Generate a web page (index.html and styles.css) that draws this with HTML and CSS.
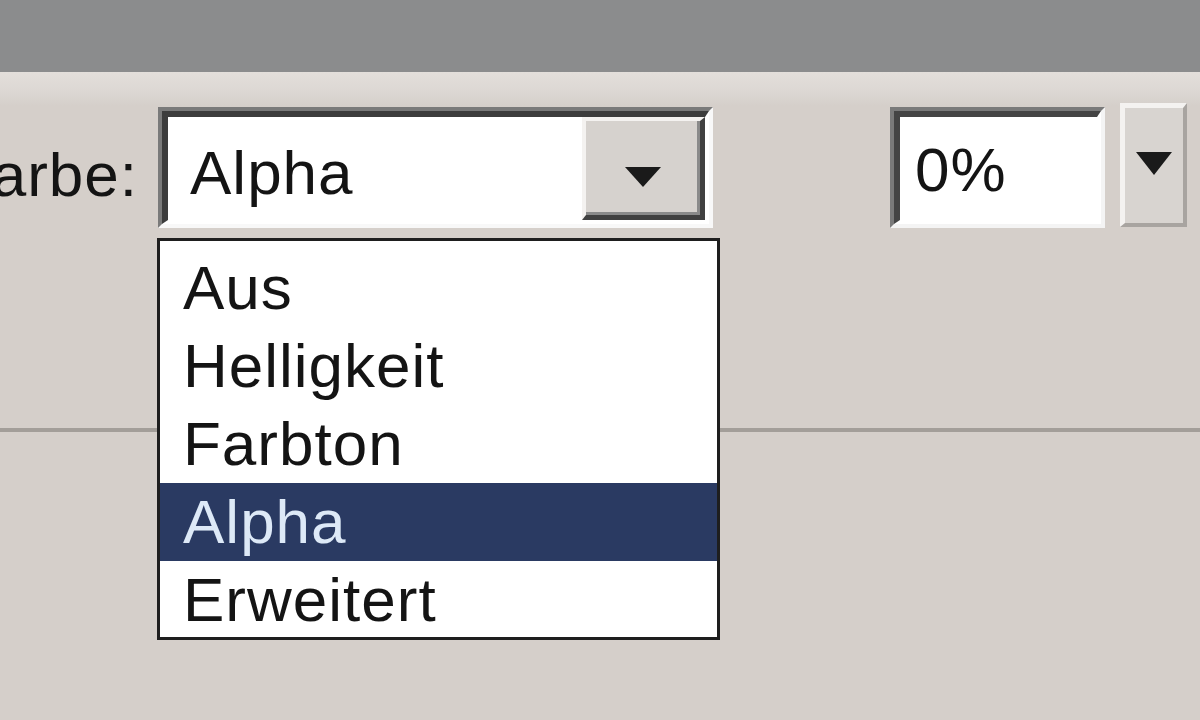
FILE: index.html
```html
<!DOCTYPE html>
<html lang="de">
<head>
<meta charset="utf-8">
<title>Farbe</title>
<link rel="stylesheet" href="styles.css">
</head>
<body>
<div class="screen">
  <div class="titlebar"></div>
  <div class="panel">
    <div class="row">
      <div class="label"><span>Farbe:</span></div>
      <div class="combo">
        <div class="combo-inner">
          <div class="combo-text">Alpha</div>
          <div class="combo-btn"><span class="arrow"></span></div>
        </div>
      </div>
      <div class="field">
        <div class="field-inner">0%</div>
      </div>
      <div class="drop-btn"><span class="arrow arrow-small"></span></div>
    </div>
  </div>
  <div class="divider"></div>
  <div class="lower"></div>
  <ul class="listbox">
    <li class="item">Aus</li>
    <li class="item">Helligkeit</li>
    <li class="item">Farbton</li>
    <li class="item selected">Alpha</li>
    <li class="item">Erweitert</li>
  </ul>
</div>
</body>
</html>
```

FILE: styles.css
```css
* { box-sizing: border-box; }

html, body {
  margin: 0;
  padding: 0;
}

body {
  width: 1200px;
  height: 720px;
  overflow: hidden;
  background: #d5cfca;
  font-family: "Liberation Sans", Arial, sans-serif;
  font-size: 62px;
  letter-spacing: 1px;
  color: #141414;
}

.screen {
  position: relative;
  width: 1200px;
  height: 720px;
  display: flex;
  flex-direction: column;
  overflow: hidden;
}

.titlebar {
  height: 72px;
  background: #8b8c8d;
  flex: none;
}

.panel {
  height: 356px;
  flex: none;
  background: linear-gradient(#e3dfdb 0, #dcd7d3 20px, #d5cfca 34px);
}

.row {
  display: flex;
  align-items: flex-start;
  padding-top: 35px;
}

.label {
  width: 138px;
  flex: none;
  display: flex;
  justify-content: flex-end;
  margin-top: 32px;
  line-height: 71px;
  white-space: nowrap;
}

.label span { flex: none; }

.combo {
  margin-left: 20px;
  width: 555px;
  height: 121px;
  flex: none;
  border: 4px solid;
  border-color: #7a7a7a #f8f8f8 #f8f8f8 #7a7a7a;
}

.combo-inner {
  height: 100%;
  display: flex;
  border-style: solid;
  border-width: 6px 4px 4px 6px;
  border-color: #3c3c3c #ffffff #ffffff #3c3c3c;
  background: #ffffff;
}

.combo-text {
  flex: 1;
  padding: 20px 0 0 22px;
  line-height: 71px;
  white-space: nowrap;
}

.combo-btn {
  width: 123px;
  flex: none;
  display: flex;
  justify-content: center;
  padding-top: 46px;
  background: #d6d2ce;
  border-style: solid;
  border-width: 4px 5px 5px 4px;
  border-color: #f4f2f0 #404040 #404040 #f4f2f0;
  box-shadow: inset -3px -3px 0 #8a8a8a;
}

.arrow {
  width: 0;
  height: 0;
  border-left: 18px solid transparent;
  border-right: 18px solid transparent;
  border-top: 20px solid #1a1a1a;
}

.arrow-small {
  border-left-width: 18px;
  border-right-width: 18px;
  border-top-width: 23px;
}

.field {
  margin-left: 177px;
  width: 215px;
  height: 121px;
  flex: none;
  border: 4px solid;
  border-color: #7a7a7a #f4f4f4 #f4f4f4 #7a7a7a;
}

.field-inner {
  height: 100%;
  background: #ffffff;
  border-style: solid;
  border-width: 6px 4px 4px 6px;
  border-color: #444444 #ffffff #ffffff #444444;
  padding: 17px 0 0 15px;
  line-height: 71px;
}

.drop-btn {
  margin-left: 15px;
  margin-top: -4px;
  width: 67px;
  height: 124px;
  flex: none;
  display: flex;
  justify-content: center;
  padding-top: 44px;
  background: #d8d4d0;
  border-style: solid;
  border-width: 5px 4px 4px 5px;
  border-color: #f4f2f0 #a8a4a0 #a8a4a0 #f4f2f0;
}

.divider {
  height: 4px;
  flex: none;
  background: #a39e99;
}

.lower {
  flex: 1;
  background: #d5cfca;
}

.listbox {
  position: absolute;
  left: 157px;
  top: 238px;
  width: 563px;
  height: 402px;
  margin: 0;
  padding: 8px 0 0;
  list-style: none;
  background: #ffffff;
  border: 3px solid #1e1e1e;
  overflow: hidden;
}

.item {
  height: 78px;
  line-height: 78px;
  padding-left: 23px;
  white-space: nowrap;
}

.item.selected {
  background: #2a3a62;
  color: #dde9f7;
}
```
